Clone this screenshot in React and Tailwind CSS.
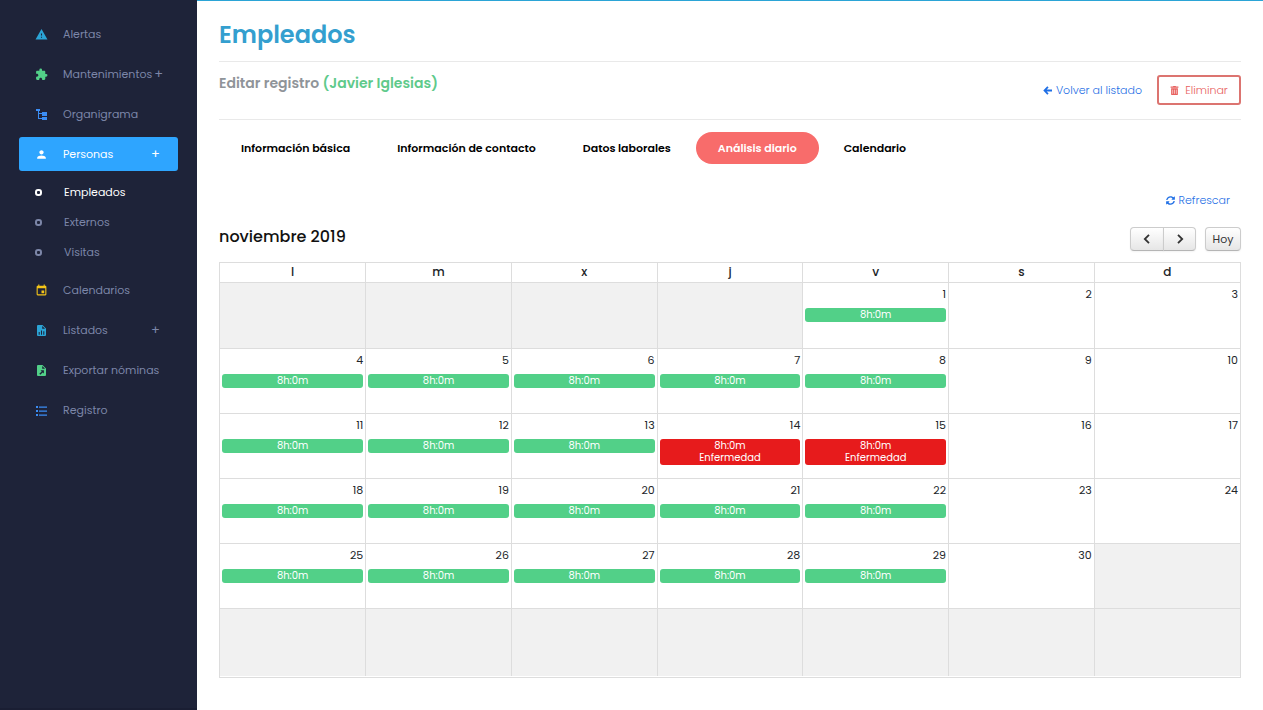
import React from "react";
import { MdWarning, MdExtension, MdPerson, MdEvent } from "react-icons/md";
import { FaTrashAlt, FaSyncAlt } from "react-icons/fa";

function TreeIcon({ className }) {
  return (
    <svg viewBox="0 0 13 13" className={className} fill="currentColor" aria-hidden="true">
      <path d="M1 1h4v2H4v2h3V4h5v4H7V6H4v4h3V9h5v3H7v-1H3V3H1z" />
    </svg>
  );
}

function ListIcon({ className }) {
  return (
    <svg viewBox="0 0 13 13" className={className} fill="currentColor" aria-hidden="true">
      <path d="M1 2h2v2H1zM4 2.400h8v1.300H4zM1 6h2v2H1zM4 6.400h8v1.300H4zM1 10h2v2H1zM4 10.400h8v1.300H4z" />
    </svg>
  );
}

function ReportIcon({ className }) {
  return (
    <svg viewBox="-0.5 -0.5 13 13" className={className} fill="currentColor" aria-hidden="true">
      <path
        fillRule="evenodd"
        d="M2.500 .5H7L10.500 4v6.500a1 1 0 0 1-1 1h-7a1 1 0 0 1-1-1v-9a1 1 0 0 1 1-1zM6.700 1.400v2.900h2.900zM3.200 7.500v2.700h1V7.500zM5.500 6v4.200h1V6zM7.800 6.800v3.400h1V6.800z"
      />
    </svg>
  );
}

function ExportIcon({ className }) {
  return (
    <svg viewBox="-0.5 -0.5 13 13" className={className} fill="currentColor" aria-hidden="true">
      <path
        fillRule="evenodd"
        d="M2.500 .5H7L10.500 4v6.500a1 1 0 0 1-1 1h-7a1 1 0 0 1-1-1v-9a1 1 0 0 1 1-1zM6.700 1.400v2.900h2.900zM5 5.800l1.200 1.100L3.800 9.200l1 1 2.400-2.300 1.200 1.200V5.800z"
      />
    </svg>
  );
}

function BackArrow({ className }) {
  return (
    <svg viewBox="0 0 10 10" className={className} fill="none" stroke="currentColor" strokeWidth="2" aria-hidden="true">
      <path d="M5.500 1 1.700 5l3.800 4M2 5h8" />
    </svg>
  );
}

function Chevron({ d }) {
  return (
    <svg viewBox="0 0 10 10" className="size-[10px]" fill="none" stroke="#333" strokeWidth="1.800" aria-hidden="true">
      <path d={d} />
    </svg>
  );
}

const people = [
  { label: "Empleados", active: true },
  { label: "Externos" },
  { label: "Visitas" },
];

function NavItem({ icon: Icon, color, label, plus, active }) {
  return (
    <a
      href="#"
      className={`flex h-[34px] items-center rounded-[3px] pl-4 pr-[18px] ${active ? "bg-[#2ea5ff] text-white" : "text-[#7c86a8]"}`}
    >
      <Icon className={`mr-[15px] size-[13px] shrink-0 ${color}`} />
      <span className="whitespace-nowrap">{label}</span>
      {plus && <span className="ml-auto pl-[2px] text-[13px]">+</span>}
    </a>
  );
}

function Sidebar() {
  return (
    <nav className="w-[197px] shrink-0 border-b-2 border-[#1a1e33] bg-[#1e2339] px-[19px] py-[17px] text-[11px]">
      <div className="flex flex-col gap-[6px]">
        <NavItem icon={MdWarning} color="text-[#2ba4d6]" label="Alertas" />
        <NavItem icon={MdExtension} color="text-[#52d088]" label="Mantenimientos" plus />
        <NavItem icon={TreeIcon} color="text-[#3b8df5]" label="Organigrama" />
        <NavItem icon={MdPerson} color="text-white" label="Personas" plus active />
      </div>
      <ul className="my-[6px]">
        {people.map((p) => (
          <li key={p.label}>
            <a
              href="#"
              className={`flex h-[30px] items-center gap-[22px] pl-4 ${p.active ? "text-white" : "text-[#7c86a8]"}`}
            >
              <span className="size-[7px] rounded-[3px] border-2 border-current" />
              {p.label}
            </a>
          </li>
        ))}
      </ul>
      <div className="flex flex-col gap-[6px]">
        <NavItem icon={MdEvent} color="text-[#f5c518]" label="Calendarios" />
        <NavItem icon={ReportIcon} color="text-[#2ba4d6]" label="Listados" plus />
        <NavItem icon={ExportIcon} color="text-[#52d088]" label="Exportar nóminas" />
        <NavItem icon={ListIcon} color="text-[#3b8df5]" label="Registro" />
      </div>
    </nav>
  );
}

const tabs = ["Información básica", "Información de contacto", "Datos laborales", "Análisis diario", "Calendario"];
const weekdays = ["l", "m", "x", "j", "v", "s", "d"];
const weeks = Array.from({ length: 6 }, (_, w) => Array.from({ length: 7 }, (_, d) => w * 7 + d - 3));

function Day({ day, weekday }) {
  if (day < 1 || day > 30) return <td className="border border-[#ddd] bg-[#f1f1f1]" />;
  const sick = day === 14 || day === 15;
  return (
    <td className="border border-[#ddd] px-[2px] align-top">
      <div className="pt-[2px] text-right text-[11px] leading-[18px]">{day}</div>
      {weekday < 5 && (
        <div
          className={`mt-[5px] rounded-[3px] py-px text-center text-[10px] leading-3 text-white ${sick ? "bg-[#e71b1c]" : "bg-[#52d088]"}`}
        >
          <div>8h:0m</div>
          {sick && <div>Enfermedad</div>}
        </div>
      )}
    </td>
  );
}

const calendarButton =
  "flex h-6 items-center justify-center border border-[#ccc] border-b-[#b5b5b5] bg-linear-to-b from-white to-[#e6e6e6] shadow-[0_1px_2px_rgba(0,0,0,0.05)]";

export default function App() {
  return (
    <div className="flex min-h-screen bg-white font-[Poppins,Inter,sans-serif] text-[#212529]">
      <Sidebar />
      <main className="min-w-0 flex-1 border-t border-[#2ba4d6] px-[22px] pb-8">
        <h1 className="border-b border-[#e9e9e9] pb-[8px] pt-[16px] text-2xl font-semibold leading-9 text-[#349fcf]">
          Empleados
        </h1>
        <div className="flex h-[58px] items-start justify-between border-b border-[#e9e9e9]">
          <h2 className="pt-[9px] text-sm font-semibold leading-6 text-[#8f9499]">
            Editar registro <span className="text-[#5fca8b]">(Javier Iglesias)</span>
          </h2>
          <div className="flex items-center gap-[15px] pt-[13px] text-[11px]">
            <a href="#" className="flex items-center gap-1 font-light text-[#1f6fe5]">
              <BackArrow className="size-[9px]" />
              Volver al listado
            </a>
            <button
              type="button"
              className="flex h-[30px] w-[84px] items-center justify-center gap-[6px] rounded-[3px] border-2 border-[#dc7470] font-light text-[#e8605e]"
            >
              <FaTrashAlt className="size-[9px]" />
              Eliminar
            </button>
          </div>
        </div>
        <div role="tablist" className="flex gap-[3px] pt-3 text-[11px] font-semibold text-black">
          {tabs.map((t) => (
            <button
              type="button"
              role="tab"
              aria-selected={t === "Análisis diario"}
              key={t}
              className={`h-8 rounded-full px-[22px] ${t === "Análisis diario" ? "bg-[#f86c6b] text-white" : ""}`}
            >
              {t}
            </button>
          ))}
        </div>
        <div className="flex justify-end pr-[11px] pt-7 text-[11px] leading-4">
          <a href="#" className="flex items-center gap-1 font-light text-[#1f6fe5]">
            <FaSyncAlt className="size-[9px]" />
            Refrescar
          </a>
        </div>
        <div className="flex items-start justify-between pb-[11px] pt-[19px]">
          <h3 className="text-base font-medium leading-5 text-[#111]">noviembre 2019</h3>
          <div className="flex gap-[9px] text-[11px] text-[#333]">
            <div className="flex">
              <button type="button" aria-label="Mes anterior" className={`${calendarButton} w-[34px] rounded-l`}>
                <Chevron d="M7 .8 2.800 5 7 9.200" />
              </button>
              <button type="button" aria-label="Mes siguiente" className={`${calendarButton} -ml-px w-[33px] rounded-r`}>
                <Chevron d="M3 .8 7.200 5 3 9.200" />
              </button>
            </div>
            <button type="button" className={`${calendarButton} w-9 rounded`}>
              Hoy
            </button>
          </div>
        </div>
        <div className="border border-[#ddd] pb-px">
          <table className="w-full table-fixed border-collapse border-hidden">
            <thead>
              <tr className="h-[19px]">
                {weekdays.map((d) => (
                  <th key={d} className="border border-[#ddd] p-0 text-xs font-medium leading-4">{d}</th>
                ))}
              </tr>
            </thead>
            <tbody>
              {weeks.map((week, i) => (
                <tr key={i} className={i === 5 ? "h-[68px]" : i === 0 ? "h-[66px]" : "h-[65px]"}>
                  {week.map((day, w) => (
                    <Day key={day} day={day} weekday={w} />
                  ))}
                </tr>
              ))}
            </tbody>
          </table>
        </div>
      </main>
    </div>
  );
}
